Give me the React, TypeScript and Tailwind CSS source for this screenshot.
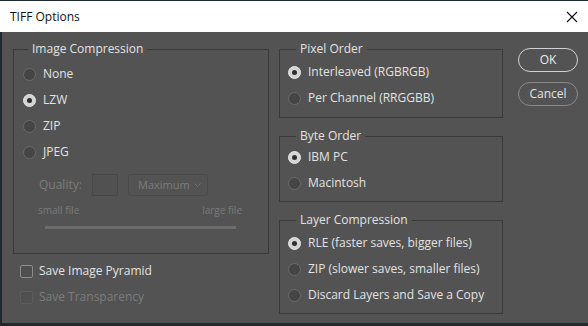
import React from "react";

type Opt = { label: string; checked?: boolean };

const Radio = ({ checked }: { checked?: boolean }) =>
  checked ? (
    <span className="flex h-[13px] w-[13px] shrink-0 items-center justify-center rounded-full border border-[#e6e6e6] bg-[#d4d4d4]">
      <span className="h-[5px] w-[5px] rounded-full bg-[#2e2e2e]" />
    </span>
  ) : (
    <span className="h-[13px] w-[13px] shrink-0 rounded-full border border-[#6a6a6a] bg-[#454545]" />
  );

const RadioRow = ({ label, checked }: Opt) => (
  <div className="flex h-[26px] items-center gap-[7px]">
    <Radio checked={checked} />
    <span className="text-[12px] leading-none text-[#e2e2e2]">{label}</span>
  </div>
);

const Group = ({
  title,
  className = "",
  legend = "ml-[8px]",
  children,
}: {
  title: string;
  className?: string;
  legend?: string;
  children: React.ReactNode;
}) => (
  <fieldset className={`border border-[#3a3a3a] ${className}`}>
    <legend className={`${legend} px-[4px] text-[12px] leading-[16px] text-[#e2e2e2]`}>
      {title}
    </legend>
    {children}
  </fieldset>
);

export default function App() {
  return (
    <div
      className="flex h-[326px] w-[588px] flex-col bg-[#1d2b2e] pt-px"
      style={{ fontFamily: '"Open Sans", "Noto Sans", sans-serif' }}
    >
      {/* title bar */}
      <div className="flex h-[31px] shrink-0 items-center justify-between bg-white pl-[10px] pr-[8px]">
        <span className="text-[12px] text-[#111]">TIFF Options</span>
        <svg width="12" height="12" viewBox="0 0 12 12" className="mr-[2px]">
          <path d="M1 1L11 11M11 1L1 11" stroke="#111" strokeWidth="1.1" />
        </svg>
      </div>

      <div className="mb-[3px] ml-[2px] flex flex-1 bg-[#535353] pl-[11px]">
        {/* left column */}
        <div className="flex w-[256px] flex-col pt-[9px]">
          <Group title="Image Compression" legend="ml-[5px]" className="h-[213px] pl-[9px]">
            <div className="pt-[4px]">
              <RadioRow label="None" />
              <RadioRow label="LZW" checked />
              <RadioRow label="ZIP" />
              <RadioRow label="JPEG" />
            </div>
            <div className="mt-[9px] flex h-[22px] items-center pl-[16px] text-[12px] text-[#7c7c7c]">
              <span className="w-[53px]">Quality:</span>
              <span className="h-[22px] w-[26px] border border-[#474747] bg-[#515151]" />
              <span className="ml-[10px] flex h-[22px] w-[80px] items-center justify-between rounded-[3px] border border-[#4a4a4a] pl-[9px] pr-[6px] text-[11px]">
                Maximum
                <svg width="7" height="4" viewBox="0 0 7 4">
                  <path d="M0.5 0.5L3.5 3.5L6.5 0.5" stroke="#6e6e6e" fill="none" />
                </svg>
              </span>
            </div>
            <div className="mt-[8px] flex w-[219px] justify-between pl-[15px] text-[10px] leading-[12px] text-[#7a7a7a]">
              <span>small file</span>
              <span>large file</span>
            </div>
            <div className="ml-[22px] mt-[10px] h-[3px] w-[191px] bg-[#6c6c6c]" />
          </Group>

          <div className="mt-[4px] flex flex-col pl-[7px]">
            <div className="flex h-[26px] items-center gap-[6px]">
              <span className="h-[13px] w-[13px] rounded-[2px] border border-[#8c8c8c] bg-[#4e4e4e]" />
              <span className="text-[12px] text-[#e2e2e2]">Save Image Pyramid</span>
            </div>
            <div className="flex h-[26px] items-center gap-[6px]">
              <span className="h-[13px] w-[13px] rounded-[2px] border border-[#5c5c5c] bg-[#505050]" />
              <span className="text-[12px] text-[#7c7c7c]">Save Transparency</span>
            </div>
          </div>
        </div>

        {/* right column */}
        <div className="ml-[10px] flex w-[224px] flex-col pt-[9px]">
          <Group title="Pixel Order" className="pb-[6px] pl-[8px]">
            <div className="pt-[2px]">
              <RadioRow label="Interleaved (RGBRGB)" checked />
              <RadioRow label="Per Channel (RRGGBB)" />
            </div>
          </Group>
          <Group title="Byte Order" className="mt-[10px] pb-[5px] pl-[8px]">
            <div>
              <RadioRow label="IBM PC" checked />
              <RadioRow label="Macintosh" />
            </div>
          </Group>
          <Group title="Layer Compression" className="mt-[10px] pb-[5px] pl-[8px]">
            <div className="pt-[2px]">
              <RadioRow label="RLE (faster saves, bigger files)" checked />
              <RadioRow label="ZIP (slower saves, smaller files)" />
              <RadioRow label="Discard Layers and Save a Copy" />
            </div>
          </Group>
        </div>

        {/* buttons */}
        <div className="ml-[15px] flex flex-col gap-[10px] pt-[16px]">
          <button className="h-[24px] w-[60px] rounded-full border-[1.5px] border-[#d2d2d2] text-[12px] text-[#ececec]">
            OK
          </button>
          <button className="h-[24px] w-[60px] rounded-full border border-[#8a8a8a] text-[12px] text-[#e2e2e2]">
            Cancel
          </button>
        </div>
      </div>
    </div>
  );
}
